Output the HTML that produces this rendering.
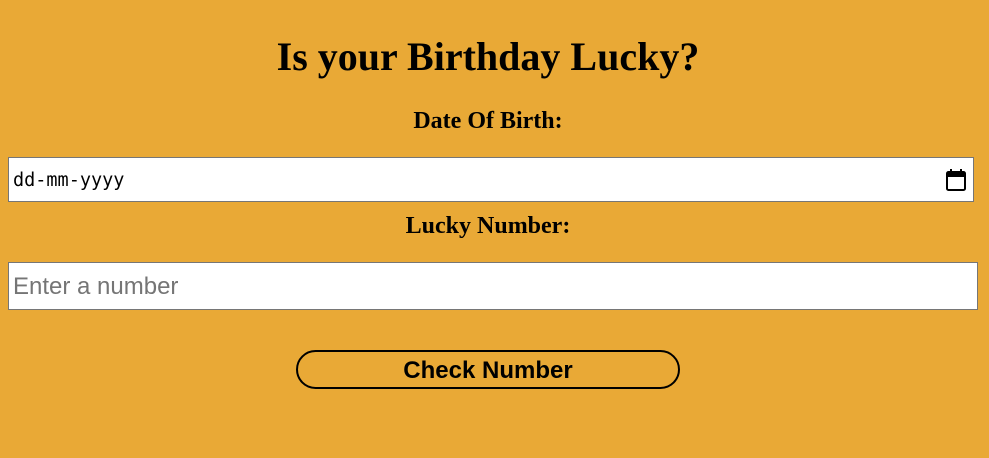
<!DOCTYPE html>
<html><head><style>
body{margin:0;width:989px;height:458px;background:#e9a936;position:relative;font-family:"Liberation Serif",serif;overflow:hidden}
.a{position:absolute}
h1{position:absolute;margin:0;left:0;width:976px;text-align:center;top:33px;font-size:40px;font-weight:bold}
.l{position:absolute;left:0;width:976px;text-align:center;font-size:24px;font-weight:bold}
.box{position:absolute;background:#fff;border:1px solid #767676;box-sizing:border-box}
</style></head><body>
<h1>Is your Birthday Lucky?</h1>
<div class="l" style="top:108px">Date Of Birth:</div>
<div class="box" style="left:8px;top:157px;width:966px;height:45px">
<span class="a" style="left:4px;top:12px;font-family:'DejaVu Sans Mono','Liberation Mono',monospace;font-size:18.5px">dd-mm-yyyy</span>
<svg class="a" style="left:937px;top:11px" width="20" height="22" viewBox="0 0 20 22"><rect x="1" y="3" width="18" height="18" rx="1.5" fill="none" stroke="#000" stroke-width="2"/><rect x="1" y="3" width="18" height="5" fill="#000"/><rect x="4" y="0" width="2" height="4" fill="#000"/><rect x="14" y="0" width="2" height="4" fill="#000"/></svg>
</div>
<div class="l" style="top:213px">Lucky Number:</div>
<div class="box" style="left:8px;top:262px;width:970px;height:48px">
<span class="a" style="left:4px;top:10px;font-family:'Liberation Sans',sans-serif;font-size:24px;color:#757575">Enter a number</span>
</div>
<div class="a" style="left:296px;top:350px;width:384px;height:39px;border:2px solid #000;border-radius:20px;box-sizing:border-box;text-align:center;font-family:'Liberation Sans',sans-serif;font-weight:bold;font-size:24px;line-height:37px">Check Number</div>
</body></html>
